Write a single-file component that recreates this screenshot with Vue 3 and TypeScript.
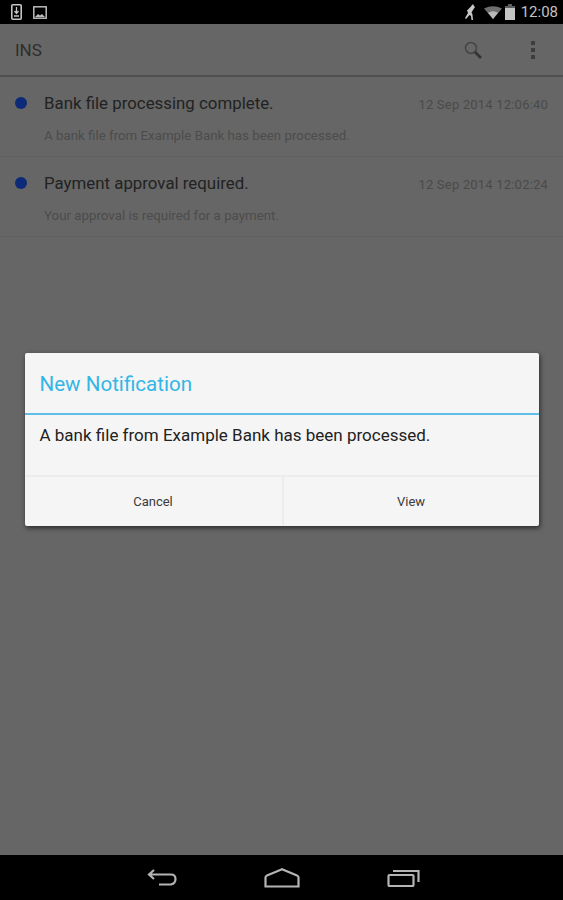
<script setup lang="ts">
interface Notice {
  title: string
  time: string
  body: string
}

const notices: Notice[] = [
  {
    title: "Bank file processing complete.",
    time: "12 Sep 2014 12:06:40",
    body: "A bank file from Example Bank has been processed.",
  },
  {
    title: "Payment approval required.",
    time: "12 Sep 2014 12:02:24",
    body: "Your approval is required for a payment.",
  },
]
</script>

<template>
  <div class="screen">
    <header class="status-bar">
      <div class="status-left">
        <svg width="11" height="16" viewBox="0 0 11 16" fill="none" stroke="#c4c4c4">
          <rect x="0.800" y="0.800" width="9.400" height="14.400" rx="1" stroke-width="1.600" />
          <path d="M5.500 3v6M3.500 7l2 2.500 2-2.500M3 12h5" stroke-width="1.300" />
        </svg>
        <svg width="14" height="13" viewBox="0 0 14 13" fill="none">
          <rect x="0.800" y="0.800" width="12.400" height="11.400" stroke="#bdbdbd" stroke-width="1.500" />
          <path d="M2 11l3-3 2 1.500 2-1.500 3 3z" fill="#bdbdbd" />
        </svg>
      </div>
      <div class="status-right">
        <svg class="mute" width="11" height="16" viewBox="0 0 11 16">
          <path d="M9 0L6 3.500 3 6.500l1 2.500-3 5 1 1 3.500-4 1.500 1 .5 4h1.500l-.5-5.500-1-2 1.500-2.500L11 3l-1-1z" fill="#c8c8c8" />
        </svg>
        <svg class="wifi" width="18" height="13" viewBox="0 0 18 13">
          <path d="M0 2.500Q9-2 18 2.500L9 13z" fill="#6e6e6e" />
          <path d="M4 6.800Q9 3.800 14 6.800L9 13z" fill="#b8b8b8" />
        </svg>
        <svg class="battery" width="10" height="16" viewBox="0 0 10 16">
          <path d="M3 0h4v2h3v14H0V2h3z" fill="#5e5e5e" />
          <rect y="4" width="10" height="12" fill="#c4c4c4" />
        </svg>
        <span class="clock">12:08</span>
      </div>
    </header>

    <main class="content">
      <div class="action-bar">
        <span class="app-title">INS</span>
        <div class="actions">
          <svg width="18" height="18" viewBox="0 0 18 18" fill="none" stroke="#333">
            <circle cx="7" cy="7" r="5.500" stroke-width="1.500" stroke="#444" />
            <path d="M11 11l6 6" stroke-width="2.600" />
          </svg>
          <div class="overflow">
            <i></i>
            <i></i>
            <i></i>
          </div>
        </div>
      </div>

      <ul class="list">
        <li v-for="n in notices" :key="n.time" class="row">
          <span class="dot"></span>
          <div class="row-text">
            <div class="row-top">
              <span class="row-title">{{ n.title }}</span>
              <span class="row-time">{{ n.time }}</span>
            </div>
            <div class="row-body">{{ n.body }}</div>
          </div>
        </li>
      </ul>

      <div class="overlay">
        <div class="dialog">
          <div class="dialog-title">New Notification</div>
          <div class="dialog-body">A bank file from Example Bank has been processed.</div>
          <div class="dialog-buttons">
            <button type="button">Cancel</button>
            <button type="button">View</button>
          </div>
        </div>
      </div>
    </main>

    <footer class="nav-bar">
      <svg width="30" height="17" viewBox="0 0 30 17" fill="none" stroke="#b4b4b4" stroke-width="2.200">
        <path d="M7 1L2 5.500 7 10M2 5.500h22q4.500 0 4.500 4.500t-4.500 5.500H12" />
      </svg>
      <svg width="36" height="20" viewBox="0 0 36 20" fill="none" stroke="#b4b4b4" stroke-width="2.200">
        <path d="M18 1.200L3 7.500q-1.500 0.500-1.500 2V18.500h33V9.500q0-1.500-1.500-2z" />
      </svg>
      <svg width="33" height="18" viewBox="0 0 33 18" fill="none" stroke="#b4b4b4" stroke-width="2.200">
        <rect x="1.500" y="6" width="25" height="11" rx="1" />
        <path d="M6 2h25.500v11" />
      </svg>
    </footer>
  </div>
</template>

<style scoped>
* {
  margin: 0;
  padding: 0;
  box-sizing: border-box;
}

.screen {
  display: flex;
  flex-direction: column;
  width: 563px;
  height: 900px;
  overflow: hidden;
  background: #666;
  font-family: Roboto, "Liberation Sans", sans-serif;
}

.status-bar {
  display: flex;
  flex: none;
  align-items: center;
  justify-content: space-between;
  height: 24px;
  padding: 0 5px 0 11px;
  background: #000;
}

.status-left,
.status-right {
  display: flex;
  align-items: center;
}

.status-left {
  gap: 11px;
}

.status-right {
  gap: 4px;
}

.mute {
  margin-right: 5px;
}

.battery {
  margin-left: -1px;
}

.clock {
  margin-left: 2px;
  font-size: 15px;
  color: #c4c4c4;
}

.content {
  position: relative;
  flex: 1;
  min-height: 0;
}

.action-bar {
  display: flex;
  align-items: center;
  justify-content: space-between;
  height: 53px;
  padding: 0 28px 0 15px;
  border-bottom: 2px solid #505050;
}

.app-title {
  font-size: 17px;
  color: #2e2e2e;
}

.actions {
  display: flex;
  align-items: center;
  gap: 49px;
}

.overflow {
  display: flex;
  flex-direction: column;
  gap: 3px;
}

.overflow i {
  display: block;
  width: 4px;
  height: 4px;
  background: #3d3d3d;
}

.list {
  list-style: none;
}

.row {
  display: flex;
  height: 80px;
  padding: 0 15px;
  border-bottom: 1px solid #606060;
}

.dot {
  flex: none;
  width: 12px;
  height: 12px;
  margin: 20px 17px 0 0;
  border-radius: 50%;
  background: #0d2a78;
}

.row-text {
  flex: 1;
  min-width: 0;
}

.row-top {
  display: flex;
  align-items: baseline;
  justify-content: space-between;
  padding-top: 16px;
}

.row-title {
  font-size: 16.850px;
  line-height: 20px;
  color: #222;
}

.row-time {
  font-size: 13px;
  letter-spacing: 0.200px;
  color: #4a4a4a;
}

.row-body {
  margin-top: 15px;
  font-size: 13.300px;
  line-height: 16px;
  color: #4c4c4c;
}

.overlay {
  position: absolute;
  inset: 0;
  display: flex;
  align-items: center;
  justify-content: center;
}

.dialog {
  width: 514px;
  border-radius: 2px;
  background: #f5f5f5;
  box-shadow: 1px 2px 5px rgba(0, 0, 0, 0.6);
}

.dialog-title {
  height: 62px;
  padding: 19px 15px 0;
  border-bottom: 2px solid #5fbfe8;
  font-size: 20.600px;
  line-height: 24px;
  color: #33b5e5;
}

.dialog-body {
  height: 60px;
  padding: 10px 15px 0;
  font-size: 17px;
  line-height: 20px;
  color: #222;
}

.dialog-buttons {
  display: grid;
  grid-template-columns: 1fr 1fr;
  height: 51px;
  border-top: 2px solid #ececec;
}

.dialog-buttons button {
  border: none;
  background: none;
  font: inherit;
  font-size: 13px;
  color: #3a3a3a;
}

.dialog-buttons button + button {
  border-left: 2px solid #ececec;
}

.nav-bar {
  display: flex;
  flex: none;
  align-items: center;
  justify-content: center;
  gap: 87px;
  height: 45px;
  padding-left: 4px;
  background: #000;
}
</style>

<style>
html,
body {
  background: #666;
}
</style>
